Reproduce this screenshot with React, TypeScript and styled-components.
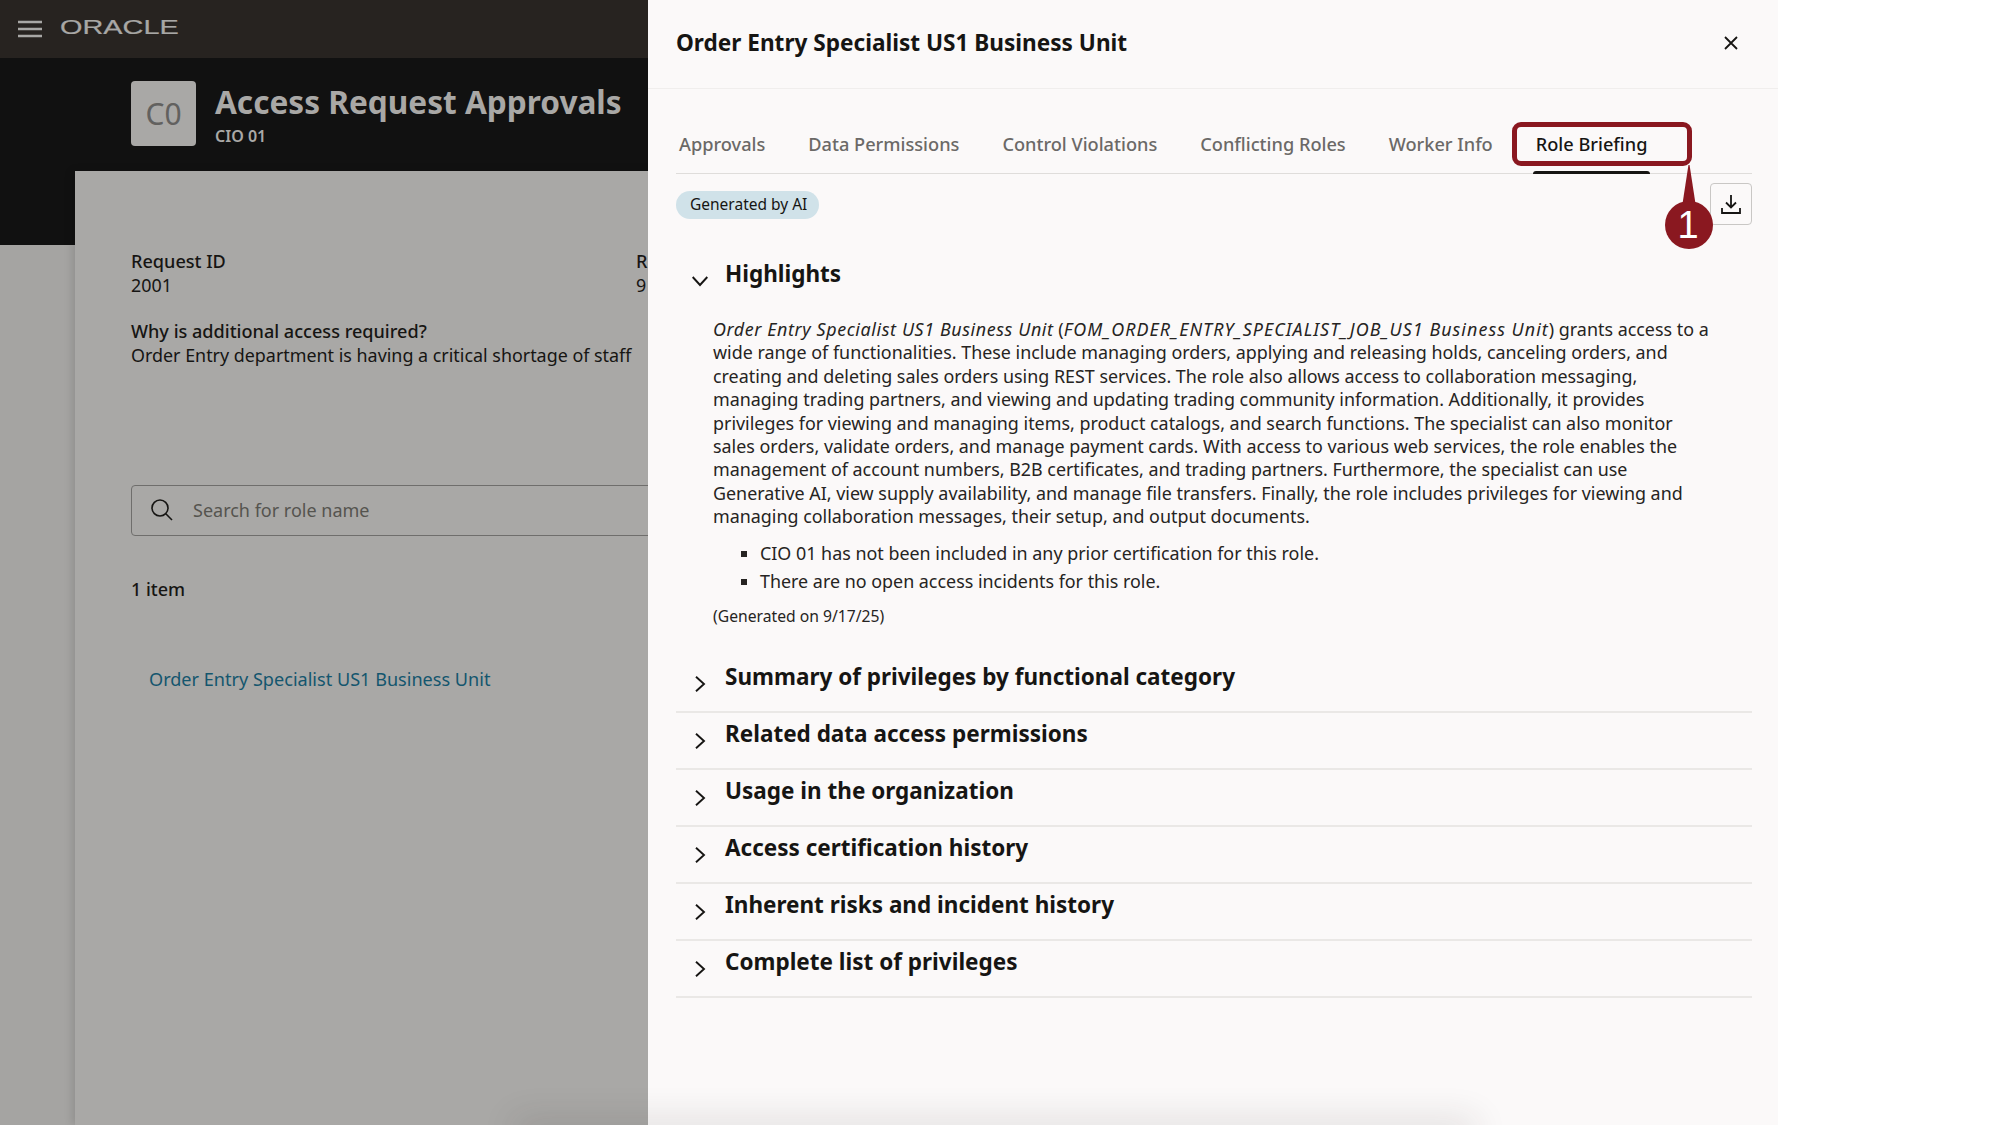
import React from "react";
import styled, { createGlobalStyle } from "styled-components";

const Global = createGlobalStyle`
  html, body { margin: 0; padding: 0; background: #fff; }
  body { font-family: "Noto Sans", "Open Sans", sans-serif; overflow: hidden; }
  * { box-sizing: border-box; }
`;

const Page = styled.div`
  position: relative;
  display: flex;
  width: 2000px;
  height: 1125px;
  overflow: hidden;
  background: #fff;
`;

/* ---------- dimmed application behind the drawer ---------- */
const Backdrop = styled.div`
  display: flex;
  flex-direction: column;
  width: 648px;
  height: 100%;
  overflow: hidden;
  flex: none;
`;
const TopBar = styled.div`
  display: flex;
  align-items: center;
  gap: 18px;
  height: 58px;
  flex: none;
  padding-left: 18px;
  background: #272320;
`;
const Logo = styled.span`
  font-family: "Liberation Sans", sans-serif;
  font-size: 19.5px;
  line-height: 20px;
  color: #a8a7a5;
  transform: scaleX(1.48);
  transform-origin: left center;
  margin-top: -5px;
  -webkit-text-stroke: 0.2px #a8a7a5;
`;
const BackdropBody = styled.div`
  flex: 1;
  display: flex;
  flex-direction: column;
  padding-left: 75px;
  background: linear-gradient(#111111 0 187px, #a5a4a2 187px);
`;
const AppHeader = styled.div`
  display: flex;
  gap: 19px;
  height: 113px;
  flex: none;
  padding: 23px 0 0 56px;
`;
const Avatar = styled.div`
  display: flex;
  align-items: center;
  justify-content: center;
  width: 65px;
  height: 65px;
  flex: none;
  border-radius: 4px;
  background: #a9a8a6;
  color: #62615f;
  font-size: 30px;
`;
const AppTitles = styled.div`
  display: flex;
  flex-direction: column;
  white-space: nowrap;
`;
const AppTitle = styled.div`
  margin-top: 1px;
  font-size: 31.6px;
  line-height: 40px;
  font-weight: 700;
  color: #a9a8a6;
`;
const AppSub = styled.div`
  margin-top: 4px;
  font-size: 16px;
  line-height: 20px;
  font-weight: 600;
  color: #a9a8a6;
`;
const Card = styled.div`
  flex: 1;
  width: 760px;
  padding: 78px 0 0 56px;
  background: #a9a8a6;
  box-shadow: -3px 0 8px rgba(0, 0, 0, 0.12);
  color: #161513;
`;
const FieldRow = styled.div`
  display: grid;
  grid-template-columns: 505px 1fr;
`;
const Label = styled.div`
  font-size: 18.1px;
  line-height: 24px;
  font-weight: 500;
  white-space: nowrap;
`;
const Value = styled.div`
  font-size: 17.9px;
  line-height: 24px;
  white-space: nowrap;
`;
const Reason = styled.div`
  margin-top: 22px;
`;
const SearchBox = styled.div`
  display: flex;
  align-items: center;
  gap: 20px;
  height: 51px;
  margin-top: 118px;
  padding: 0 0 2px 19px;
  border: 1px solid #6f6e6c;
  border-radius: 4px;
  font-size: 18px;
  color: #55544f;
`;
const ItemCount = styled.div`
  margin-top: 41px;
  font-size: 18px;
  line-height: 24px;
  font-weight: 500;
`;
const RoleLink = styled.div`
  margin-top: 66px;
  padding-left: 18px;
  font-size: 18.1px;
  line-height: 24px;
  color: #14566e;
`;

/* ---------- drawer ---------- */
const Drawer = styled.div`
  display: flex;
  flex-direction: column;
  width: 1130px;
  height: 100%;
  flex: none;
  background: #fbf9f9;
  color: #161513;
`;
const DrawerHeader = styled.div`
  display: flex;
  align-items: center;
  justify-content: space-between;
  height: 89px;
  flex: none;
  padding: 0 40px 2px 28px;
  border-bottom: 1px solid #f0eeed;
`;
const DrawerTitle = styled.div`
  font-size: 22.6px;
  line-height: 30px;
  font-weight: 700;
  white-space: nowrap;
`;
const DrawerContent = styled.div`
  display: flex;
  flex-direction: column;
  padding: 0 26px 0 28px;
`;
const Tabs = styled.div`
  display: flex;
  gap: 43px;
  height: 85px;
  flex: none;
  padding: 0 0 0 3px;
  border-bottom: 1px solid #dfdddb;
`;
const Tab = styled.div<{ $active?: boolean }>`
  position: relative;
  padding-top: 42px;
  font-size: 18.2px;
  line-height: 26px;
  font-weight: 500;
  white-space: nowrap;
  color: ${(p) => (p.$active ? "#161513" : "#6b6967")};
  ${(p) =>
    p.$active &&
    `&::after {
      content: "";
      position: absolute;
      left: -3px;
      right: -3px;
      bottom: -1px;
      height: 3px;
      border-radius: 3px 3px 0 0;
      background: #161513;
    }`}
`;
const Toolbar = styled.div`
  display: flex;
  align-items: flex-start;
  justify-content: space-between;
  height: 52px;
  flex: none;
  padding-top: 9px;
`;
const Chip = styled.div`
  margin-top: 8px;
  padding: 0 12px 0 14px;
  height: 28px;
  border-radius: 14px;
  background: #d0e2e9;
  font-size: 15.5px;
  line-height: 27px;
  white-space: nowrap;
`;
const IconButton = styled.div`
  display: flex;
  align-items: center;
  justify-content: center;
  width: 42px;
  height: 42px;
  border: 1px solid #c9c7c5;
  border-radius: 4px;
`;
const SectionRow = styled.div`
  display: flex;
  height: 57px;
  flex: none;
  padding-top: 7px;
  border-bottom: 2px solid #eae8e6;
`;
const HighlightRow = styled.div`
  display: flex;
  height: 44px;
  flex: none;
  margin-top: 26px;
  padding-top: 8px;
`;
const ChevronSlot = styled.div`
  display: flex;
  align-items: center;
  justify-content: center;
  width: 48px;
  height: 28px;
  margin: 7px 1px 0 0;
  flex: none;
`;
const SectionTitle = styled.div`
  font-size: 22.5px;
  line-height: 28px;
  font-weight: 700;
  white-space: nowrap;
`;
const Highlights = styled.div`
  padding: 22px 0 0 37px;
`;
const Paragraph = styled.div`
  font-size: 17.9px;
  line-height: 23.4px;
  color: #262422;
`;
const Line = styled.span`
  display: block;
  white-space: nowrap;
`;
const Emphasis = styled.em<{ $tracking: number }>`
  letter-spacing: ${(p) => p.$tracking}px;
`;
const Bullets = styled.ul`
  margin: 10px 0 0;
  padding: 0 0 0 47px;
  list-style: square;
  font-size: 17.9px;
  line-height: 28px;
  color: #262422;
`;
const GeneratedOn = styled.div`
  margin-top: 10px;
  margin-bottom: 29px;
  font-size: 15.7px;
  line-height: 22px;
  color: #262422;
`;

/* ---------- overlays ---------- */
const CalloutFrame = styled.div`
  position: absolute;
  left: 1512px;
  top: 122px;
  width: 180px;
  height: 44px;
  border: 5px solid #8a1820;
  border-radius: 9px;
`;
const CalloutStem = styled.div`
  position: absolute;
  left: 1682px;
  top: 165px;
  width: 14px;
  height: 42px;
  background: #8a1820;
  clip-path: polygon(46% 0, 54% 0, 100% 100%, 0 100%);
`;
const CalloutBadge = styled.div`
  position: absolute;
  left: 1665px;
  top: 201px;
  display: flex;
  align-items: center;
  justify-content: center;
  width: 48px;
  height: 48px;
  padding-right: 2px;
  border-radius: 50%;
  background: #8a1820;
  color: #fff;
  font-family: "Liberation Sans", sans-serif;
  font-size: 38px;
`;
const BottomGlow = styled.div`
  position: absolute;
  left: 520px;
  top: 1125px;
  width: 950px;
  height: 10px;
  box-shadow: 0 0 34px 6px rgba(40, 38, 36, 0.14);
`;

const Chevron = ({ open }: { open?: boolean }) => (
  <svg width="16" height="16" viewBox="0 0 16 16" fill="none" stroke="#161513" strokeWidth="1.9" aria-hidden>
    {open ? <path d="M.7 4L8 12l7.3-8" /> : <path d="M4 .7L12 8l-8 7.3" />}
  </svg>
);

const sections = [
  "Summary of privileges by functional category",
  "Related data access permissions",
  "Usage in the organization",
  "Access certification history",
  "Inherent risks and incident history",
  "Complete list of privileges",
];

const tabs = ["Approvals", "Data Permissions", "Control Violations", "Conflicting Roles", "Worker Info"];

export default function App() {
  return (
    <Page>
      <Global />
      <Backdrop>
        <TopBar>
          <svg width="24" height="18" viewBox="0 0 24 18" stroke="#a8a7a5" strokeWidth="2.4" aria-hidden>
            <path d="M0 2h24M0 9h24M0 16h24" />
          </svg>
          <Logo>ORACLE</Logo>
        </TopBar>
        <BackdropBody>
          <AppHeader>
            <Avatar>C0</Avatar>
            <AppTitles>
              <AppTitle>Access Request Approvals</AppTitle>
              <AppSub>CIO 01</AppSub>
            </AppTitles>
          </AppHeader>
          <Card>
            <FieldRow>
              <div>
                <Label>Request ID</Label>
                <Value>2001</Value>
              </div>
              <div>
                <Label>R</Label>
                <Value>9</Value>
              </div>
            </FieldRow>
            <Reason>
              <Label>Why is additional access required?</Label>
              <Value>Order Entry department is having a critical shortage of staff</Value>
            </Reason>
            <SearchBox>
              <svg width="22" height="22" viewBox="0 0 22 22" fill="none" stroke="#161513" strokeWidth="1.6" aria-hidden>
                <circle cx="9" cy="9" r="8" />
                <path d="M14.8 14.8L21 21" />
              </svg>
              Search for role name
            </SearchBox>
            <ItemCount>1 item</ItemCount>
            <RoleLink>Order Entry Specialist US1 Business Unit</RoleLink>
          </Card>
        </BackdropBody>
      </Backdrop>
      <Drawer>
        <DrawerHeader>
          <DrawerTitle>Order Entry Specialist US1 Business Unit</DrawerTitle>
          <svg width="14" height="14" viewBox="0 0 14 14" stroke="#161513" strokeWidth="1.8" aria-hidden>
            <path d="M1 1l12 12M13 1L1 13" />
          </svg>
        </DrawerHeader>
        <DrawerContent>
          <Tabs>
            {tabs.map((t) => (
              <Tab key={t}>{t}</Tab>
            ))}
            <Tab $active>Role Briefing</Tab>
          </Tabs>
          <Toolbar>
            <Chip>Generated by AI</Chip>
            <IconButton>
              <svg width="22" height="22" viewBox="0 0 22 22" fill="none" stroke="#161513" strokeWidth="1.8" aria-hidden>
                <path d="M11 2v12M6 9.5l5 5 5-5M2 15v5h18v-5" />
              </svg>
            </IconButton>
          </Toolbar>
          <HighlightRow>
            <ChevronSlot>
              <Chevron open />
            </ChevronSlot>
            <SectionTitle>Highlights</SectionTitle>
          </HighlightRow>
          <Highlights>
            <Paragraph>
              <Line>
                <Emphasis $tracking={0.6}>Order Entry Specialist US1 Business Unit</Emphasis> (
                <Emphasis $tracking={1.04}>FOM_ORDER_ENTRY_SPECIALIST_JOB_US1 Business Unit</Emphasis>) grants access to a
              </Line>
              <Line>wide range of functionalities. These include managing orders, applying and releasing holds, canceling orders, and</Line>
              <Line>creating and deleting sales orders using REST services. The role also allows access to collaboration messaging,</Line>
              <Line>managing trading partners, and viewing and updating trading community information. Additionally, it provides</Line>
              <Line>privileges for viewing and managing items, product catalogs, and search functions. The specialist can also monitor</Line>
              <Line>sales orders, validate orders, and manage payment cards. With access to various web services, the role enables the</Line>
              <Line>management of account numbers, B2B certificates, and trading partners. Furthermore, the specialist can use</Line>
              <Line>Generative AI, view supply availability, and manage file transfers. Finally, the role includes privileges for viewing and</Line>
              <Line>managing collaboration messages, their setup, and output documents.</Line>
            </Paragraph>
            <Bullets>
              <li>CIO 01 has not been included in any prior certification for this role.</li>
              <li>There are no open access incidents for this role.</li>
            </Bullets>
            <GeneratedOn>(Generated on 9/17/25)</GeneratedOn>
          </Highlights>
          {sections.map((s) => (
            <SectionRow key={s}>
              <ChevronSlot>
                <Chevron />
              </ChevronSlot>
              <SectionTitle>{s}</SectionTitle>
            </SectionRow>
          ))}
        </DrawerContent>
      </Drawer>
      <CalloutFrame />
      <CalloutStem />
      <CalloutBadge>1</CalloutBadge>
      <BottomGlow />
    </Page>
  );
}
